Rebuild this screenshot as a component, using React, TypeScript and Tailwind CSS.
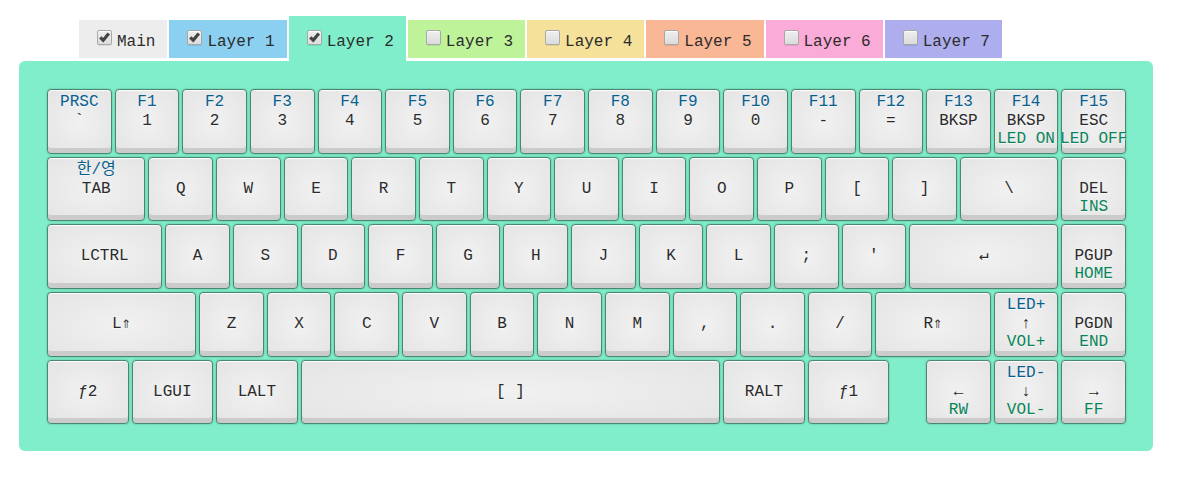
import { useState } from "react";
import clsx from "clsx";

type Layer = { name: string; color: string };

const layers: Layer[] = [
  { name: "Main", color: "bg-[#ededed]" },
  { name: "Layer 1", color: "bg-[#8bd0f0]" },
  { name: "Layer 2", color: "bg-[#80eecb]" },
  { name: "Layer 3", color: "bg-[#bff39a]" },
  { name: "Layer 4", color: "bg-[#f5e19a]" },
  { name: "Layer 5", color: "bg-[#f9b795]" },
  { name: "Layer 6", color: "bg-[#faabd7]" },
  { name: "Layer 7", color: "bg-[#aeaeee]" },
];

// Widths are counted in quarter units; the board is 16 units (64 quarters) wide.
const spans: Record<number, string> = {
  2: "col-span-2",
  4: "col-span-4",
  5: "col-span-5",
  6: "col-span-6",
  7: "col-span-7",
  9: "col-span-9",
  25: "col-span-25",
};

type KeyDef = { w: number; label?: string; top?: string; bottom?: string; gap?: boolean };

const k = (label: string, w = 4, top = "", bottom = ""): KeyDef => ({ label, w, top, bottom });

const keys: KeyDef[] = [
  k("`", 4, "PRSC"),
  ...["1", "2", "3", "4", "5", "6", "7", "8", "9", "0", "-", "="].map((c, i) => k(c, 4, `F${i + 1}`)),
  k("BKSP", 4, "F13"),
  k("BKSP", 4, "F14", "LED ON"),
  k("ESC", 4, "F15", "LED OFF"),

  k("TAB", 6, "한/영"),
  ..."QWERTYUIOP[]".split("").map((c) => k(c)),
  k("\\", 6),
  k("DEL", 4, "", "INS"),

  k("LCTRL", 7),
  ..."ASDFGHJKL;'".split("").map((c) => k(c)),
  k("↵", 9),
  k("PGUP", 4, "", "HOME"),

  k("L⇑", 9),
  ..."ZXCVBNM,./".split("").map((c) => k(c)),
  k("R⇑", 7),
  k("↑", 4, "LED+", "VOL+"),
  k("PGDN", 4, "", "END"),

  k("ƒ2", 5),
  k("LGUI", 5),
  k("LALT", 5),
  k("[ ]", 25),
  k("RALT", 5),
  k("ƒ1", 5),
  { w: 2, gap: true },
  k("←", 4, "", "RW"),
  k("↓", 4, "LED-", "VOL-"),
  k("→", 4, "", "FF"),
];

function Tab({
  layer,
  active,
  checked,
  onToggle,
}: {
  layer: Layer;
  active: boolean;
  checked: boolean;
  onToggle: () => void;
}) {
  return (
    <label
      className={clsx(
        "flex shrink-0 gap-[5px] pl-[18px] pr-3",
        layer.color,
        active ? "pt-[14px] pb-2" : "mt-1 mb-[3px] pt-[10px] pb-[5px]",
      )}
    >
      <span className="relative size-[15px]">
        <input
          type="checkbox"
          checked={checked}
          onChange={onToggle}
          className="block size-[15px] appearance-none rounded-[2px] border border-[#a8a8a8] bg-linear-to-b from-[#eeeeee] to-[#dcdcdc] shadow-[0_1px_0_rgba(0,0,0,0.08),inset_0_1px_1px_rgba(255,255,255,0.9)]"
        />
        {checked && (
          <svg viewBox="0 0 15 15" className="pointer-events-none absolute inset-0 size-[15px]" aria-hidden="true">
            <path d="M3.2 7.4 L6.2 10.2 L11.8 3.4" fill="none" stroke="#444444" strokeWidth="3.2" />
          </svg>
        )}
      </span>
      <span className="pt-[2px] leading-[21px]">{layer.name}</span>
    </label>
  );
}

function Key({ def }: { def: KeyDef }) {
  if (def.gap) return <div className={spans[def.w]} />;
  return (
    <div className={clsx("min-w-0 pt-[2px] pr-[1px] pb-[1px] pl-[2px]", spans[def.w])}>
      <button
        type="button"
        className="grid size-full grid-cols-1 grid-rows-[19px_18px_18px] content-start justify-items-center rounded-[4px] border border-[#488871] bg-[radial-gradient(#f1f1f1,#e4e4e4)] pt-[3px] leading-[18px] whitespace-nowrap shadow-[0_0_2px_rgba(0,0,0,0.3),inset_0_1px_1px_#ffffff,inset_0_-5px_0_#cbcbcb] [text-shadow:0_1px_0_rgba(255,255,255,0.6)]"
      >
        <span className="row-start-1 text-[#06608f]">{def.top}</span>
        <span className="row-start-2 leading-[19px]">{def.label}</span>
        <span className="row-start-3 flex w-0 justify-center text-[#088558]">{def.bottom}</span>
      </button>
    </div>
  );
}

export default function App() {
  const [enabled, setEnabled] = useState<boolean[]>(layers.map((_, i) => i <= 2));
  const active = Math.max(0, enabled.lastIndexOf(true));

  const toggle = (index: number) => setEnabled((prev) => prev.map((on, i) => (i === index ? !on : on)));

  return (
    <main className="pt-4 pr-[34px] pb-6 pl-[19px] font-['Liberation_Mono','Noto_Sans_CJK_KR',monospace] text-base text-[#2b2b2b]">
      <div className="flex gap-[2px] pl-[60px]">
        {layers.map((layer, i) => (
          <Tab
            key={layer.name}
            layer={layer}
            active={i === active}
            checked={enabled[i]}
            onToggle={() => toggle(i)}
          />
        ))}
      </div>
      <div className={clsx("rounded-[6px] p-[26px]", layers[active].color)}>
        <div className="grid aspect-[16/5] grid-cols-64 grid-rows-5">
          {keys.map((def, i) => (
            <Key key={i} def={def} />
          ))}
        </div>
      </div>
    </main>
  );
}
